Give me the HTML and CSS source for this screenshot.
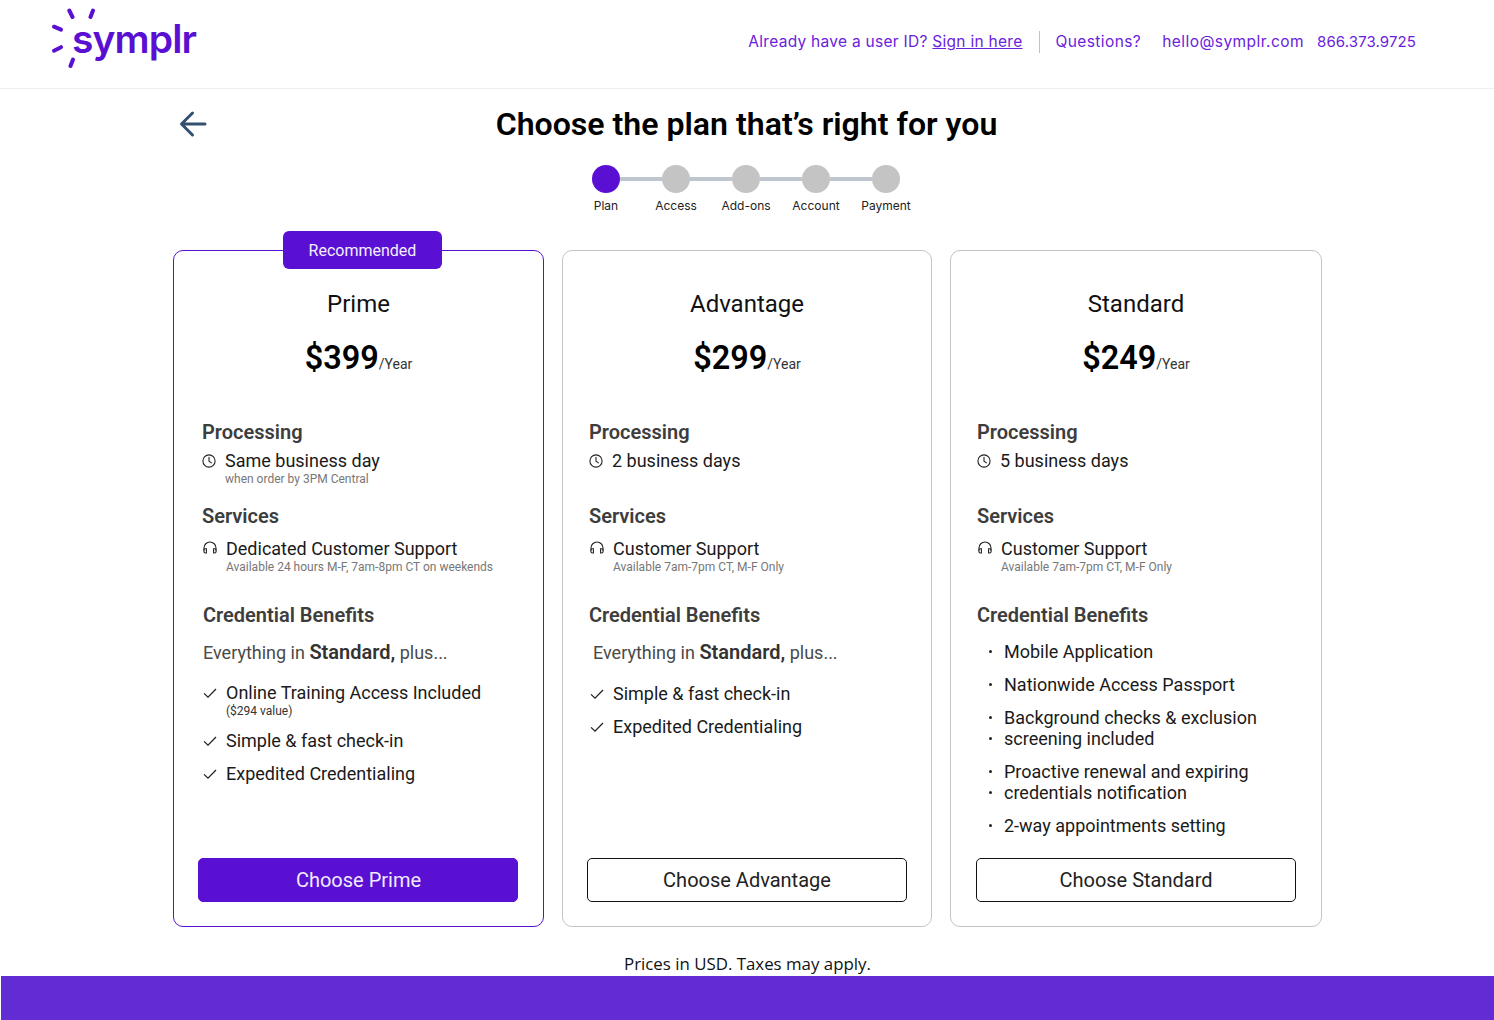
FILE: index.html
```html
<!DOCTYPE html>
<html lang="en">
<head>
<meta charset="utf-8">
<title>Choose a plan</title>
<link rel="stylesheet" href="styles.css">
</head>
<body>
<svg class="defs" width="0" height="0" aria-hidden="true">
  <symbol id="clock" viewBox="0 0 14 14"><circle cx="7" cy="7" r="6.1" fill="none" stroke="currentColor" stroke-width="1.1"/><path d="M7 3.4V7.3L9.4 8.9" fill="none" stroke="currentColor" stroke-width="1.1" stroke-linecap="round"/></symbol>
  <symbol id="phones" viewBox="0 0 16 14"><path d="M2 9.5V7a6 6 0 0 1 12 0V9.5" fill="none" stroke="currentColor" stroke-width="1.1"/><path d="M4.4 7.8H3.4a1.5 1.5 0 0 0-1.5 1.5v1.2a1.5 1.5 0 0 0 1.5 1.5h1ZM11.6 7.8h1a1.5 1.5 0 0 1 1.5 1.5v1.2a1.5 1.5 0 0 1-1.5 1.5h-1Z" fill="none" stroke="currentColor" stroke-width="1.1"/></symbol>
  <symbol id="check" viewBox="0 0 14 14"><path d="M1 7.4L5 11.2 13 3" fill="none" stroke="currentColor" stroke-width="1.3"/></symbol>
</svg>

<header class="topbar">
  <a class="logo">
    <svg class="rays" viewBox="0 0 50 60" width="50" height="60"><g stroke="#5a10d2" stroke-width="4" stroke-linecap="round"><path d="M18.3 2.5L21.5 9"/><path d="M42 2.5L39.5 9"/><path d="M3 18.7L10 21.7"/><path d="M3 42.7L10 39.2"/><path d="M22 51.5L19.5 58"/></g></svg>
    <span class="logo-word">symplr</span>
  </a>
  <nav class="contact">
    <span>Already have a user ID? <u>Sign in here</u></span>
    <span class="divider"></span>
    <span class="questions">Questions?</span>
    <span class="mail">hello@symplr.com</span>
    <span class="phone">866.373.9725</span>
  </nav>
</header>

<main class="page">
  <div class="heading-row">
    <svg class="back" viewBox="0 0 28 28" width="28" height="28"><path d="M26 14H3M13.5 3L2.5 14 13.5 25" fill="none" stroke="#34506f" stroke-width="3" stroke-linecap="round" stroke-linejoin="round"/></svg>
    <h1>Choose the plan that’s right for you</h1>
  </div>

  <div class="stepper">
    <div class="track">
      <span class="dot active"></span><span class="bar"></span>
      <span class="dot"></span><span class="bar"></span>
      <span class="dot"></span><span class="bar"></span>
      <span class="dot"></span><span class="bar"></span>
      <span class="dot"></span>
    </div>
    <div class="labels">
      <span>Plan</span><span>Access</span><span>Add-ons</span><span>Account</span><span>Payment</span>
    </div>
  </div>

  <section class="plans">
    <article class="card card-prime">
      <div class="badge">Recommended</div>
      <h2>Prime</h2>
      <p class="price"><b>$399</b><span>/Year</span></p>
      <div class="block block-processing">
        <h3>Processing</h3>
        <div class="row"><svg class="ic ic-clock"><use href="#clock"/></svg><span>Same business day</span></div>
        <p class="sub">when order by 3PM Central</p>
      </div>
      <div class="block block-services">
        <h3>Services</h3>
        <div class="row row-serv"><svg class="ic ic-ph"><use href="#phones"/></svg><span>Dedicated Customer Support</span></div>
        <p class="sub sub-serv">Available 24 hours M-F, 7am-8pm CT on weekends</p>
      </div>
      <div class="block">
        <h3 class="h-cred">Credential Benefits</h3>
        <p class="intro">Everything in <b>Standard,</b> plus...</p>
        <ul class="checks">
          <li class="tick has-sub"><svg class="ic"><use href="#check"/></svg><span>Online Training Access Included</span></li>
          <li class="value">($294 value)</li>
          <li class="tick"><svg class="ic"><use href="#check"/></svg><span>Simple &amp; fast check-in</span></li>
          <li class="tick"><svg class="ic"><use href="#check"/></svg><span>Expedited Credentialing</span></li>
        </ul>
      </div>
      <button class="cta primary">Choose Prime</button>
    </article>

    <article class="card card-adv">
      <h2>Advantage</h2>
      <p class="price"><b>$299</b><span>/Year</span></p>
      <div class="block block-processing">
        <h3>Processing</h3>
        <div class="row"><svg class="ic ic-clock"><use href="#clock"/></svg><span>2 business days</span></div>
      </div>
      <div class="block block-services">
        <h3>Services</h3>
        <div class="row row-serv"><svg class="ic ic-ph"><use href="#phones"/></svg><span>Customer Support</span></div>
        <p class="sub sub-serv">Available 7am-7pm CT, M-F Only</p>
      </div>
      <div class="block">
        <h3 class="h-cred">Credential Benefits</h3>
        <p class="intro">Everything in <b>Standard,</b> plus...</p>
        <ul class="checks">
          <li class="tick"><svg class="ic"><use href="#check"/></svg><span>Simple &amp; fast check-in</span></li>
          <li class="tick"><svg class="ic"><use href="#check"/></svg><span>Expedited Credentialing</span></li>
        </ul>
      </div>
      <button class="cta">Choose Advantage</button>
    </article>

    <article class="card card-std">
      <h2>Standard</h2>
      <p class="price"><b>$249</b><span>/Year</span></p>
      <div class="block block-processing">
        <h3>Processing</h3>
        <div class="row"><svg class="ic ic-clock"><use href="#clock"/></svg><span>5 business days</span></div>
      </div>
      <div class="block block-services">
        <h3>Services</h3>
        <div class="row row-serv"><svg class="ic ic-ph"><use href="#phones"/></svg><span>Customer Support</span></div>
        <p class="sub sub-serv">Available 7am-7pm CT, M-F Only</p>
      </div>
      <div class="block">
        <h3 class="h-cred">Credential Benefits</h3>
        <ul class="bullets">
          <li><span>Mobile Application</span></li>
          <li><span>Nationwide Access Passport</span></li>
          <li><span>Background checks &amp; exclusion</span><span>screening included</span></li>
          <li><span>Proactive renewal and expiring</span><span>credentials notification</span></li>
          <li><span>2-way appointments setting</span></li>
        </ul>
      </div>
      <button class="cta">Choose Standard</button>
    </article>
  </section>

  <p class="note">Prices in USD. Taxes may apply.</p>
</main>
<footer class="footer"></footer>
</body>
</html>
```

FILE: styles.css
```css
* { box-sizing: border-box; }
html, body { margin: 0; padding: 0; }
body {
  width: 1494px;
  height: 1020px;
  overflow: hidden;
  background: #fff;
  color: #111;
  font-family: Roboto, "Liberation Sans", sans-serif;
  display: flex;
  flex-direction: column;
}
.defs { position: absolute; }
h1, h2, h3, p, ul { margin: 0; padding: 0; }
ul { list-style: none; }

/* top bar */
.topbar {
  height: 89px;
  flex: none;
  border-bottom: 1px solid #eeeeee;
  display: flex;
  align-items: center;
  justify-content: space-between;
  padding: 0 78px 7px 72px;
}
.logo { position: relative; display: block; margin-top: -4px; }
.rays { position: absolute; left: -21px; top: -8px; }
.logo-word {
  display: block;
  font-family: Inter, sans-serif;
  font-size: 39px;
  line-height: 46px;
  font-weight: 600;
  color: #5a10d2;
  letter-spacing: -0.9px;
}
.contact {
  display: flex;
  align-items: center;
  margin-top: 3px;
  font-family: Inter, sans-serif;
  font-size: 15.5px;
  line-height: 22px;
  letter-spacing: 0.28px;
  color: #6a22dc;
  white-space: nowrap;
}
.divider { width: 1px; height: 22px; background: #c9b4ee; margin: 0 16px; }
.questions { letter-spacing: 0.4px; }
.mail { margin-left: 21px; letter-spacing: 0.45px; }
.phone { margin-left: 13px; font-size: 15px; letter-spacing: 0.1px; }

/* heading */
.page { flex: 1; display: flex; flex-direction: column; min-height: 0; padding-left: 173px; }
.heading-row {
  width: 1147px;
  height: 70px;
  display: grid;
  grid-template-columns: 1fr auto 1fr;
  align-items: center;
}
.back { margin-left: 6px; margin-top: 0; }
h1 {
  font-size: 32.1px;
  line-height: 70px;
  font-weight: 600;
  color: #000;
  white-space: nowrap;
}

/* stepper */
.stepper { width: 350px; margin: 6px 0 0 398px; }
.track { display: flex; align-items: center; padding: 0 21px; }
.dot { width: 28px; height: 28px; border-radius: 50%; background: #c4c4c4; flex: none; }
.dot.active { background: #5a10d2; }
.bar { width: 42px; height: 4px; background: #bfc6d0; flex: none; }
.labels {
  display: grid;
  grid-template-columns: repeat(5, 70px);
  margin-top: 6px;
  font-family: Inter, sans-serif;
  font-size: 12px;
  line-height: 14px;
  color: #222;
  text-align: center;
}

/* plans */
.plans {
  display: grid;
  grid-template-columns: 371px 370px 372px;
  column-gap: 18px;
  margin-top: 37px;
  width: 1149px;
}
.card {
  position: relative;
  height: 677px;
  border: 1px solid #c4c4c4;
  border-radius: 10px;
  padding: 25px 26px 24px;
  display: flex;
  flex-direction: column;
}
.card-prime { border-color: #5a10d2; padding-left: 28px; padding-right: 24px; }
.badge {
  position: absolute;
  top: -20px;
  left: 109px;
  width: 159px;
  height: 38px;
  background: #5a10d2;
  color: #f4efff;
  border-radius: 6px;
  font-size: 16px;
  line-height: 40px;
  text-align: center;
}
h2 {
  font-size: 24px;
  line-height: 56px;
  font-weight: 400;
  text-align: center;
  color: #111;
  margin-top: 0;
  margin-left: 0;
}
.card-prime h2 { margin-left: -4px; margin-right: 0; }
.price {
  margin-top: 1px;
  height: 50px;
  text-align: center;
  line-height: 50px;
  color: #000;
}
.card-prime .price { margin-left: -4px; }
.price b { font-size: 32.4px; font-weight: 600; }
.price span { font-size: 14px; margin-left: 0; color: #333; }

.block-processing { margin-top: 35px; height: 84px; }
.block-services { height: 99px; }
h3 {
  font-size: 20px;
  line-height: 28px;
  font-weight: 600;
  color: #3d3d3d;
}
.row {
  display: flex;
  align-items: center;
  height: 28px;
  margin-top: 0;
  font-size: 18px;
  color: #1a1a1a;
}
.row-serv { margin-top: 4px; }
.ic { width: 14px; height: 14px; flex: none; margin-right: 9px; color: #222; }
.ic-clock { margin-top: 1px; }
.ic-ph { width: 16px; margin-left: -1px; margin-right: 8px; }
.row .ic { margin-left: 0; }
.row-serv .ic { margin-right: 8px; }
.sub {
  font-size: 12px;
  line-height: 14px;
  color: #777;
  margin-left: 23px;
  margin-top: -2px;
}
.sub-serv { margin-left: 24px; margin-top: -2px; }
.card-adv .sub-serv, .card-std .sub-serv { margin-left: 24px; }

.h-cred { margin-left: 1px; }
.card-adv .h-cred, .card-std .h-cred { margin-left: 0; }
.intro {
  margin-top: 9px;
  margin-left: 1px;
  font-size: 18px;
  line-height: 28px;
  color: #4a4a4a;
}
.card-adv .intro { margin-left: 4px; }
.intro b { font-weight: 600; color: #333; font-size: 20px; }

.checks { margin-top: 15px; margin-left: 1px; }
.card-adv .checks { margin-left: 1px; margin-top: 16px; }
.tick {
  display: flex;
  align-items: center;
  height: 21px;
  margin-bottom: 12px;
  font-size: 18px;
  color: #1a1a1a;
}
.tick .ic { margin-right: 9px; }
.tick.has-sub { margin-bottom: 0; }
.value {
  font-size: 12px;
  line-height: 14px;
  color: #333;
  margin: 1px 0 12px 23px;
}

.bullets { margin-top: 12px; font-size: 18px; line-height: 21px; color: #1a1a1a; }
.bullets li { margin-bottom: 12px; }
.bullets span { display: block; position: relative; padding-left: 27px; }
.bullets span::before {
  content: "";
  position: absolute;
  left: 12px;
  top: 9px;
  width: 3px;
  height: 3px;
  border-radius: 50%;
  background: #222;
}

.cta {
  margin-top: auto;
  align-self: center;
  flex: none;
  width: 320px;
  height: 44px;
  border: 1px solid #111;
  border-radius: 5px;
  background: #fff;
  color: #222;
  font-family: Roboto, sans-serif;
  font-size: 20px;
}
.card-prime .cta { margin-left: -6px; padding-left: 8px; }
.cta.primary { background: #5a10d2; border-color: #5a10d2; color: #f0eaff; }

.note {
  margin: 26px 0 0 451px;
  font-family: "Open Sans", sans-serif;
  font-size: 16.85px;
  line-height: 22px;
  color: #111;
}
.footer {
  position: absolute;
  left: 1px;
  right: 0;
  bottom: 0;
  height: 44px;
  background: #622cd4;
}
```
